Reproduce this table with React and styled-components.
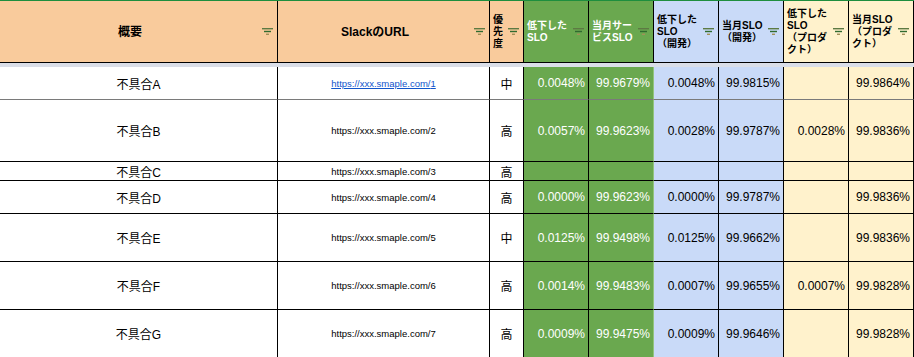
import React from "react";
import styled, { createGlobalStyle } from "styled-components";

const GlobalStyle = createGlobalStyle`
  html, body { margin: 0; padding: 0; background: #ffffff; }
  body { font-family: "Liberation Sans", Arial, "Noto Sans CJK JP", sans-serif; color: #000; }
`;

const COLS = "278px 212px 34px 65px 65px 65px 65px 65px 65px";

const Sheet = styled.div`
  width: 914px;
  height: 357px;
  overflow: hidden;
  border-top: 1px solid #1e8e3e;
  box-sizing: border-box;
`;

const Row = styled.div`
  display: grid;
  grid-template-columns: ${COLS};
  height: ${(p) => p.$h}px;
`;

const Band = styled.div`
  height: 4px;
  background: #dadee8;
`;

const HeadCell = styled.div`
  box-sizing: border-box;
  background: ${(p) => p.$bg};
  border-right: 1px solid #000;
  border-bottom: 1px solid #000;
  display: flex;
  align-items: center;
  padding: 0 4px 0 ${(p) => (p.$center ? 0 : 3)}px;
  gap: 2px;
  min-width: 0;
`;

const HeadText = styled.div`
  flex: 1;
  min-width: 0;
  font-weight: bold;
  font-size: ${(p) => (p.$big ? 12 : 10)}px;
  line-height: 12px;
  text-align: ${(p) => (p.$center ? "center" : "left")};
  color: ${(p) => p.$color || "#000"};
  white-space: nowrap;
`;

const Cell = styled.div`
  box-sizing: border-box;
  background: ${(p) => p.$bg || "#fff"};
  border-right: 1px solid ${(p) => p.$line || "#000"};
  border-bottom: 1px solid ${(p) => p.$bottom || "#000"};
  display: flex;
  align-items: center;
  justify-content: ${(p) => (p.$right ? "flex-end" : "center")};
  padding-right: ${(p) => (p.$right ? 3 : 0)}px;
  font-size: 12px;
  color: ${(p) => p.$color || "#000"};
  white-space: nowrap;
  overflow: hidden;
`;

const Url = styled.span`
  font-size: 9.5px;
  color: ${(p) => (p.$link ? "#1155cc" : "#000")};
  text-decoration: ${(p) => (p.$link ? "underline" : "none")};
`;

const FilterIcon = () => (
  <svg width="11" height="7" viewBox="0 0 11 7" style={{ flexShrink: 0 }}>
    <rect x="0" y="0" width="11" height="1.4" fill="#5d7a43" />
    <rect x="2" y="2.8" width="7" height="1.4" fill="#2f6b2f" />
    <rect x="4" y="5.6" width="3" height="1.4" fill="#a39058" />
  </svg>
);

const ORANGE = "#f9cb9c";
const GREEN = "#6aa84f";
const BLUE = "#c9daf8";
const YELLOW = "#fff2cc";

const headers = [
  { bg: ORANGE, lines: ["概要"], center: true, big: true },
  { bg: ORANGE, lines: ["SlackのURL"], center: true, big: true },
  { bg: ORANGE, lines: ["優", "先", "度"] },
  { bg: GREEN, lines: ["低下した", "SLO"], color: "#fff" },
  { bg: GREEN, lines: ["当月サー", "ビスSLO"], color: "#fff" },
  { bg: BLUE, lines: ["低下した", "SLO", "（開発）"] },
  { bg: BLUE, lines: ["当月SLO", "（開発）"] },
  { bg: YELLOW, lines: ["低下した", "SLO", "（プロダ", "クト）"] },
  { bg: YELLOW, lines: ["当月SLO", "（プロダ", "クト）"] },
];

const rows = [
  { h: 33, name: "不具合A", n: 1, pr: "中", link: true, bottom: "#7a7a7a", v: ["0.0048%", "99.9679%", "0.0048%", "99.9815%", "", "99.9864%"] },
  { h: 62, name: "不具合B", n: 2, pr: "高", v: ["0.0057%", "99.9623%", "0.0028%", "99.9787%", "0.0028%", "99.9836%"] },
  { h: 19, name: "不具合C", n: 3, pr: "高", v: ["", "", "", "", "", ""] },
  { h: 33, name: "不具合D", n: 4, pr: "高", v: ["0.0000%", "99.9623%", "0.0000%", "99.9787%", "", "99.9836%"] },
  { h: 48, name: "不具合E", n: 5, pr: "中", v: ["0.0125%", "99.9498%", "0.0125%", "99.9662%", "", "99.9836%"] },
  { h: 48, name: "不具合F", n: 6, pr: "高", v: ["0.0014%", "99.9483%", "0.0007%", "99.9655%", "0.0007%", "99.9828%"] },
  { h: 48, name: "不具合G", n: 7, pr: "高", v: ["0.0009%", "99.9475%", "0.0009%", "99.9646%", "", "99.9828%"] },
];

const valueStyle = [
  { bg: GREEN, color: "#fff" },
  { bg: GREEN, color: "#fff", line: "#93c47d" },
  { bg: BLUE },
  { bg: BLUE },
  { bg: YELLOW },
  { bg: YELLOW },
];

export default function App() {
  return (
    <>
      <GlobalStyle />
      <Sheet>
        <Row $h={62}>
          {headers.map((h, i) => (
            <HeadCell key={i} $bg={h.bg} $center={h.center}>
              <HeadText $center={h.center} $big={h.big} $color={h.color}>
                {h.lines.map((l, j) => (
                  <div key={j}>{l}</div>
                ))}
              </HeadText>
              <FilterIcon />
            </HeadCell>
          ))}
        </Row>
        <Band />
        {rows.map((r) => (
          <Row key={r.name} $h={r.h}>
            <Cell $bottom={r.bottom}>{r.name}</Cell>
            <Cell $bottom={r.bottom}>
              <Url $link={r.link}>https://xxx.smaple.com/{r.n}</Url>
            </Cell>
            <Cell $bottom={r.bottom}>{r.pr}</Cell>
            {r.v.map((val, i) => (
              <Cell
                key={i}
                $right
                $bg={valueStyle[i].bg}
                $color={valueStyle[i].color}
                $line={valueStyle[i].line}
                $bottom={r.bottom}
              >
                {val}
              </Cell>
            ))}
          </Row>
        ))}
      </Sheet>
    </>
  );
}
